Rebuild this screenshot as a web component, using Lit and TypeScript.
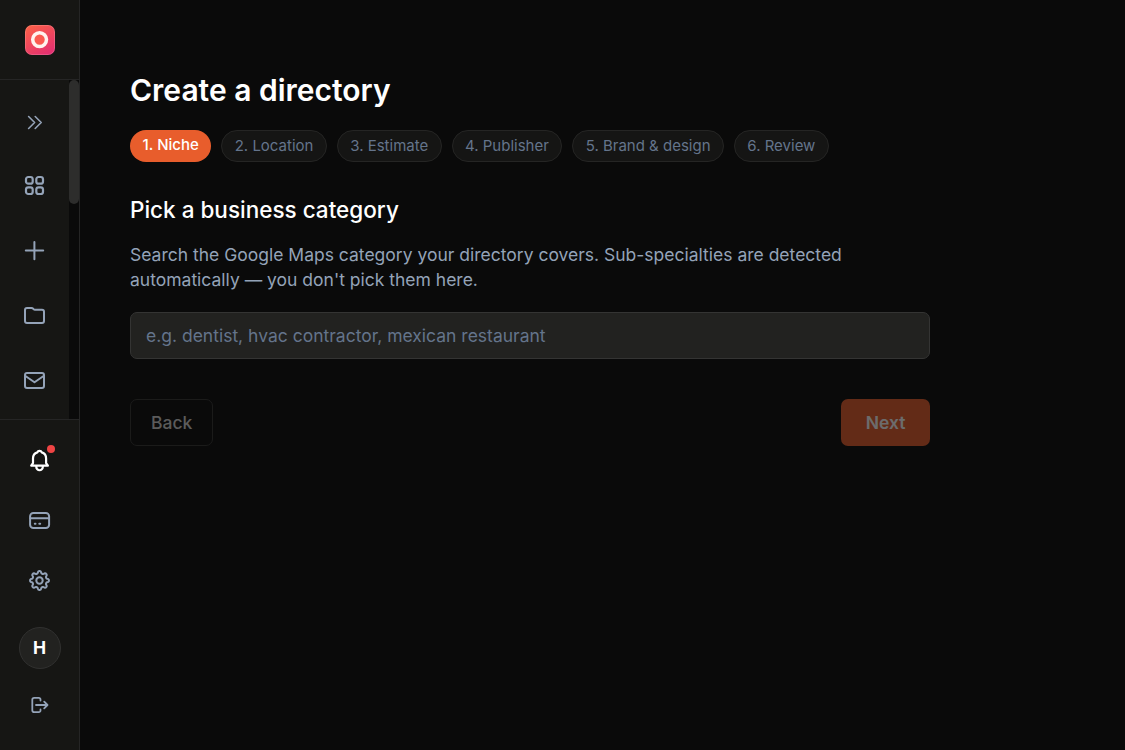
import { LitElement, html, css, svg, SVGTemplateResult } from "lit";
import { customElement, property, state } from "lit/decorators.js";

// Cog outline: eight soft teeth around the centre of a 25-unit box.
const cogPath = (() => {
  const pts: string[] = [];
  for (let i = 0; i < 160; i++) {
    const a = (i / 160) * Math.PI * 2;
    const wave = Math.tanh(1.6 * Math.cos(8 * a)) / Math.tanh(1.6);
    const r = 8.3 + 1.1 * wave;
    pts.push(`${(12.5 + r * Math.sin(a)).toFixed(2)} ${(12.5 - r * Math.cos(a)).toFixed(2)}`);
  }
  return `M${pts.join("L")}Z`;
})();

const icons: Record<string, SVGTemplateResult> = {
  expand: svg`<path stroke-width="1.6" d="M6.6 6.500l6 6-6 6M13.200 6.500l6 6-6 6"/>`,
  grid: svg`<g stroke-width="2.200"><rect x="4" y="4" width="6.700" height="6.700" rx="2.300"/><rect x="14.300" y="4" width="6.700" height="6.700" rx="2.300"/><rect x="4" y="14.300" width="6.700" height="6.700" rx="2.300"/><rect x="14.300" y="14.300" width="6.700" height="6.700" rx="2.300"/></g>`,
  plus: svg`<path d="M12.400 3.900v17.400M3.800 12.600h17.400"/>`,
  folder: svg`<path d="M3 7a2 2 0 0 1 2-2h4.600c.9 0 1.200.4 1.700.9s.9.900 1.700.900H20a2 2 0 0 1 2 2v9.200a2 2 0 0 1-2 2H5a2 2 0 0 1-2-2z"/>`,
  mail: svg`<rect x="3" y="5" width="19" height="15" rx="2"/><path d="M3.400 8l9.100 6.300L21.600 8"/>`,
  bell: svg`<path stroke-width="2.200" d="M4.200 17.700h16.700l-1.800-2.600v-4.600c0-3.300-1.800-5.300-4.300-6.100a2.400 2.400 0 0 0-4.500 0C7.800 5.200 6 7.200 6 10.500v4.600z"/><path stroke-width="2.200" d="M9.300 18v1a3.250 3.250 0 0 0 6.500 0v-1"/>`,
  card: svg`<rect x="3.100" y="5" width="19" height="15" rx="3.300"/><path d="M3.400 10.300h18.400M7.800 15.700h.7M12.300 15.700h.9"/>`,
  cog: svg`<path d=${cogPath}/><circle cx="12.500" cy="12.500" r="3.200"/>`,
  logout: svg`<path stroke-width="1.800" d="M13.500 7.500V6.600a1.800 1.800 0 0 0-1.800-1.800H7.200a1.900 1.900 0 0 0-1.900 1.900v10.600a1.900 1.900 0 0 0 1.900 1.900h4.500a1.800 1.800 0 0 0 1.800-1.800v-.9M9 12h11.400M17.200 8.600l3.300 3.400-3.300 3.400"/>`,
};

@customElement("ui-icon")
class UiIcon extends LitElement {
  static styles = css`
    :host { display: block; width: 25px; height: 25px; flex: none; }
    svg { display: block; }
  `;
  @property() name = "";
  render() {
    return html`<svg width="25" height="25" viewBox="0 0 25 25" fill="none" stroke="currentColor" stroke-width="2" stroke-linecap="round" stroke-linejoin="round">${icons[this.name]}</svg>`;
  }
}

@customElement("side-bar")
class SideBar extends LitElement {
  static styles = css`
    :host {
      box-sizing: border-box; display: flex; flex-direction: column; width: 80px; height: 100%;
      background: #161614; border-right: 1px solid #252525; color: #94a3b8; flex: none;
    }
    .brand { box-sizing: border-box; flex: none; height: 80px; padding: 25px; border-bottom: 1px solid #252525; }
    .brand svg { display: block; }
    .nav { display: flex; flex: none; height: 339px; }
    .items { flex: 1; display: flex; flex-direction: column; align-items: center; gap: 40px; padding-top: 30px; }
    .items .first { margin-bottom: -2px; }
    .track { width: 10px; background: #0a0a0a; }
    .thumb { height: 124px; border-radius: 5px; background: #2d2d2c; }
    .footer { flex: 1; border-top: 1px solid #252525; display: flex; flex-direction: column; align-items: center; padding-top: 28px; }
    .footer ui-icon { margin-bottom: 35px; }
    .footer ui-icon:last-child { margin-bottom: 0; }
    .bell { position: relative; color: #fff; }
    .dot { position: absolute; left: 20px; top: -3px; width: 8px; height: 8px; border-radius: 50%; background: #ef4444; }
    .avatar {
      box-sizing: border-box; width: 42px; height: 42px; flex: none; margin: -1px 0 24px 1px; padding-right: 1px; border-radius: 50%;
      border: 1px solid #313130; background: #222220; color: #fff;
      font-size: 17.5px; font-weight: 700; line-height: 40px; text-align: center;
    }
  `;
  render() {
    return html`
      <div class="brand">
        <svg width="30" height="30" viewBox="0 0 30 30">
          <defs>
            <linearGradient id="fill" x1="0.2" y1="0" x2="0.8" y2="1">
              <stop offset="0" stop-color="#fb5f48"/><stop offset="1" stop-color="#e32e72"/>
            </linearGradient>
          </defs>
          <rect width="30" height="30" rx="7" fill="url(#fill)"/>
          <rect x=".5" y=".5" width="29" height="29" rx="6.5" fill="none" stroke="#fff" stroke-opacity=".16"/>
          <circle cx="14.600" cy="14.600" r="6.900" fill="#fb5b50" stroke="#fff3ee" stroke-width="3.500"/>
        </svg>
      </div>
      <div class="nav">
        <div class="items">
          <ui-icon class="first" name="expand"></ui-icon>
          <ui-icon name="grid"></ui-icon>
          <ui-icon name="plus"></ui-icon>
          <ui-icon name="folder"></ui-icon>
          <ui-icon name="mail"></ui-icon>
        </div>
        <div class="track"><div class="thumb"></div></div>
      </div>
      <div class="footer">
        <div class="bell"><ui-icon name="bell"></ui-icon><span class="dot"></span></div>
        <ui-icon name="card"></ui-icon>
        <ui-icon name="cog"></ui-icon>
        <div class="avatar">H</div>
        <ui-icon name="logout"></ui-icon>
      </div>
    `;
  }
}

@customElement("app-root")
class AppRoot extends LitElement {
  static styles = css`
    :host {
      display: flex; height: 100vh; overflow: hidden; background: #0a0a0a; color: #fff;
      font-family: Inter, "Liberation Sans", sans-serif; font-size: 17.5px; line-height: 25px;
    }
    main { width: 800px; padding: 70px 50px 0; }
    h1 { margin: 0 0 20px; font-size: 30px; line-height: 40px; font-weight: 600; }
    .steps { display: flex; gap: 10px; margin-bottom: 33px; font-size: 15px; line-height: 20px; }
    .step { padding: 5px 12.42px; border: 1px solid #252524; border-radius: 16px; background: #151514; color: #64748b; white-space: nowrap; }
    .step.active { padding: 5px 12.5px; border: 0; background: #e85d2c; color: #fff; font-weight: 500; }
    h2 { margin: 0 0 17px; font-size: 22.5px; line-height: 30px; font-weight: 500; }
    p { margin: 0 0 20px; color: #94a3b8; max-width: 760px; }
    .field {
      box-sizing: border-box; display: block; width: 800px; height: 47px; margin: 0; padding: 0 15px;
      border: 1px solid #343433; border-radius: 7px; background: #222220; color: #fff; font: inherit; outline: none;
    }
    .field::placeholder { color: #64748b; opacity: 1; }
    .actions { display: flex; justify-content: space-between; margin-top: 40px; }
    button { box-sizing: border-box; height: 47px; border-radius: 7px; font: inherit; padding: 0 20px; margin: 0; }
    .back { border: 1px solid #353534; background: transparent; color: #d4d4d4; opacity: 0.4; font-weight: 500; }
    .next { border: 0; padding: 0 24.5px; background: #e85d2c; color: #fff; opacity: 0.4; font-weight: 600; }
  `;
  @state() private current = 0;
  private steps = ["Niche", "Location", "Estimate", "Publisher", "Brand & design", "Review"];
  render() {
    return html`
      <side-bar></side-bar>
      <main>
        <h1>Create a directory</h1>
        <div class="steps">
          ${this.steps.map((s, i) => html`<div class="step ${i === this.current ? "active" : ""}">${i + 1}. ${s}</div>`)}
        </div>
        <h2>Pick a business category</h2>
        <p>Search the Google Maps category your directory covers. Sub-specialties are detected automatically — you don't pick them here.</p>
        <input class="field" placeholder="e.g. dentist, hvac contractor, mexican restaurant">
        <div class="actions">
          <button class="back" disabled>Back</button>
          <button class="next" disabled>Next</button>
        </div>
      </main>
    `;
  }
}
